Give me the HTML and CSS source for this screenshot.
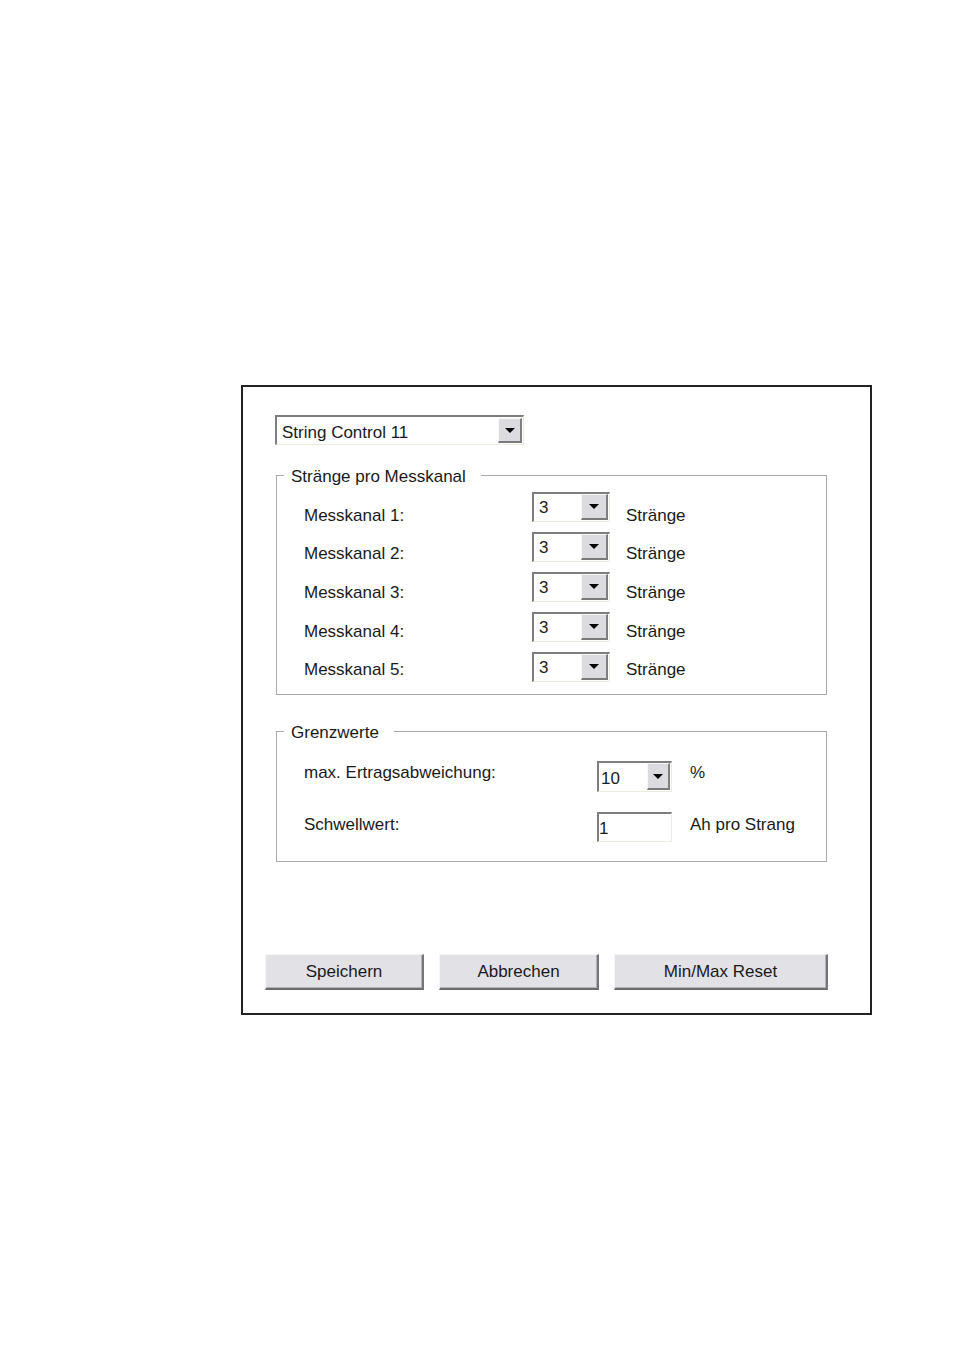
FILE: index.html
```html
<!DOCTYPE html>
<html lang="de">
<head>
<meta charset="utf-8">
<title>String Control</title>
<link rel="stylesheet" href="styles.css">
</head>
<body>
<div class="frame">
  <div class="combo combo-main">
    <span class="combo-text">String Control 11</span>
    <span class="combo-btn"><span class="arrow"></span></span>
  </div>

  <div class="group group-strings">
    <span class="legend">Stränge pro Messkanal</span>
    <div class="strings-grid">
      <div class="col-labels">
        <div class="row-label">Messkanal 1:</div>
        <div class="row-label">Messkanal 2:</div>
        <div class="row-label">Messkanal 3:</div>
        <div class="row-label">Messkanal 4:</div>
        <div class="row-label">Messkanal 5:</div>
      </div>
      <div class="col-combos">
        <div class="combo combo-small"><span class="combo-text">3</span><span class="combo-btn"><span class="arrow"></span></span></div>
        <div class="combo combo-small"><span class="combo-text">3</span><span class="combo-btn"><span class="arrow"></span></span></div>
        <div class="combo combo-small"><span class="combo-text">3</span><span class="combo-btn"><span class="arrow"></span></span></div>
        <div class="combo combo-small"><span class="combo-text">3</span><span class="combo-btn"><span class="arrow"></span></span></div>
        <div class="combo combo-small"><span class="combo-text">3</span><span class="combo-btn"><span class="arrow"></span></span></div>
      </div>
      <div class="col-labels col-units">
        <div class="row-label">Stränge</div>
        <div class="row-label">Stränge</div>
        <div class="row-label">Stränge</div>
        <div class="row-label">Stränge</div>
        <div class="row-label">Stränge</div>
      </div>
    </div>
  </div>

  <div class="group group-limits">
    <span class="legend">Grenzwerte</span>
    <div class="limit-row limit-row-first">
      <span class="limit-label">max. Ertragsabweichung:</span>
      <div class="combo combo-pct"><span class="combo-text">10</span><span class="combo-btn"><span class="arrow"></span></span></div>
      <span class="limit-unit">%</span>
    </div>
    <div class="limit-row limit-row-second">
      <span class="limit-label">Schwellwert:</span>
      <div class="textbox"><span class="textbox-text">1</span></div>
      <span class="limit-unit">Ah pro Strang</span>
    </div>
  </div>

  <div class="buttons">
    <button class="btn btn-save" type="button">Speichern</button>
    <button class="btn btn-cancel" type="button">Abbrechen</button>
    <button class="btn btn-reset" type="button">Min/Max Reset</button>
  </div>
</div>
</body>
</html>
```

FILE: styles.css
```css
html, body {
  margin: 0;
  padding: 0;
  background: #ffffff;
}

body {
  font-family: "Liberation Sans", Arial, sans-serif;
  font-size: 17px;
  color: #1a1a1a;
  padding: 385px 0 0 241px;
}

.frame {
  box-sizing: border-box;
  width: 631px;
  height: 630px;
  border: 2px solid #222222;
  padding-top: 28px;
}

/* ---------- combo boxes ---------- */
.combo {
  box-sizing: border-box;
  display: flex;
  background: #ffffff;
  border-style: solid;
  border-width: 2px 1px 1px 2px;
  border-color: #7e7e7e #ecebe2 #ecebe2 #7e7e7e;
}

.combo-text {
  flex: 1;
  line-height: 19px;
  white-space: nowrap;
}

.combo-btn {
  box-sizing: border-box;
  display: flex;
  align-items: center;
  justify-content: center;
  background: #dcdbe0;
  border-style: solid;
  border-width: 1px 2px 2px 1px;
  border-color: #f8f8f8 #7f7f7f #7a7a7a #f8f8f8;
}

.arrow {
  width: 0;
  height: 0;
  border-left: 5px solid transparent;
  border-right: 5px solid transparent;
  border-top: 5px solid #000000;
  margin-top: 1px;
}

.combo-main {
  width: 249px;
  height: 30px;
  margin-left: 32px;
}
.combo-main .combo-text {
  padding: 6px 0 0 5px;
}
.combo-main .combo-btn {
  width: 24px;
  margin: 1px 1px 1px 0;
}

.combo-small {
  width: 78px;
  height: 30px;
}
.combo-small .combo-text {
  padding: 4px 0 0 5px;
}
.combo-small .combo-btn {
  width: 27px;
  margin: 0 1px 1px 0;
}

.combo-pct {
  width: 75px;
  height: 31px;
}
.combo-pct .combo-text {
  padding: 6px 0 0 2px;
}
.combo-pct .combo-btn {
  width: 23px;
  margin: 0 1px 1px 0;
}

.textbox {
  box-sizing: border-box;
  width: 75px;
  height: 30px;
  background: #ffffff;
  border-style: solid;
  border-width: 2px 1px 1px 2px;
  border-color: #7e7e7e #ecebe2 #ecebe2 #7e7e7e;
}
.textbox-text {
  display: block;
  line-height: 19px;
  padding: 5px 0 0 0;
}

/* ---------- group boxes ---------- */
.group {
  position: relative;
  box-sizing: border-box;
  width: 551px;
  margin-left: 33px;
  border: 1px solid #ababab;
}

.legend {
  position: absolute;
  top: -9px;
  left: 7px;
  padding: 0 15px 0 7px;
  background: #ffffff;
  line-height: 19px;
  white-space: nowrap;
}

.group-strings {
  height: 220px;
  margin-top: 30px;
}

.strings-grid {
  display: grid;
  grid-template-columns: 228px 78px auto;
  padding-left: 27px;
}

.col-labels {
  display: flex;
  flex-direction: column;
  padding-top: 20.5px;
}

.col-units {
  padding-left: 16px;
}

.row-label {
  line-height: 38.7px;
  height: 38.7px;
  white-space: nowrap;
}

.col-combos {
  display: flex;
  flex-direction: column;
  gap: 10px;
  padding-top: 15.5px;
}

.group-limits {
  height: 131px;
  margin-top: 36px;
  padding: 29px 0 0 27px;
}

.limit-row {
  display: flex;
  align-items: flex-start;
}
.limit-row-second {
  margin-top: 20px;
}

.limit-label {
  width: 293px;
  line-height: 19px;
  white-space: nowrap;
}
.limit-row-first .limit-label,
.limit-row-first .limit-unit {
  margin-top: 2px;
}
.limit-row-second .limit-label,
.limit-row-second .limit-unit {
  margin-top: 3px;
}

.limit-unit {
  margin-left: 18px;
  line-height: 19px;
  white-space: nowrap;
}

/* ---------- buttons ---------- */
.buttons {
  display: flex;
  gap: 15px;
  margin: 92px 0 0 22px;
}

.btn {
  box-sizing: border-box;
  height: 36px;
  padding: 0;
  font-family: "Liberation Sans", Arial, sans-serif;
  font-size: 17px;
  color: #1a1a1a;
  background: #e2e1e6;
  border-style: solid;
  border-width: 1px 2px 2px 1px;
  border-color: #f6f6f6 #767676 #6c6c6c #f6f6f6;
  box-shadow: inset -1px -1px 0 #b4b4b8;
  line-height: 32px;
}

.btn-save { width: 159px; }
.btn-cancel { width: 160px; }
.btn-reset { width: 214px; }
```
